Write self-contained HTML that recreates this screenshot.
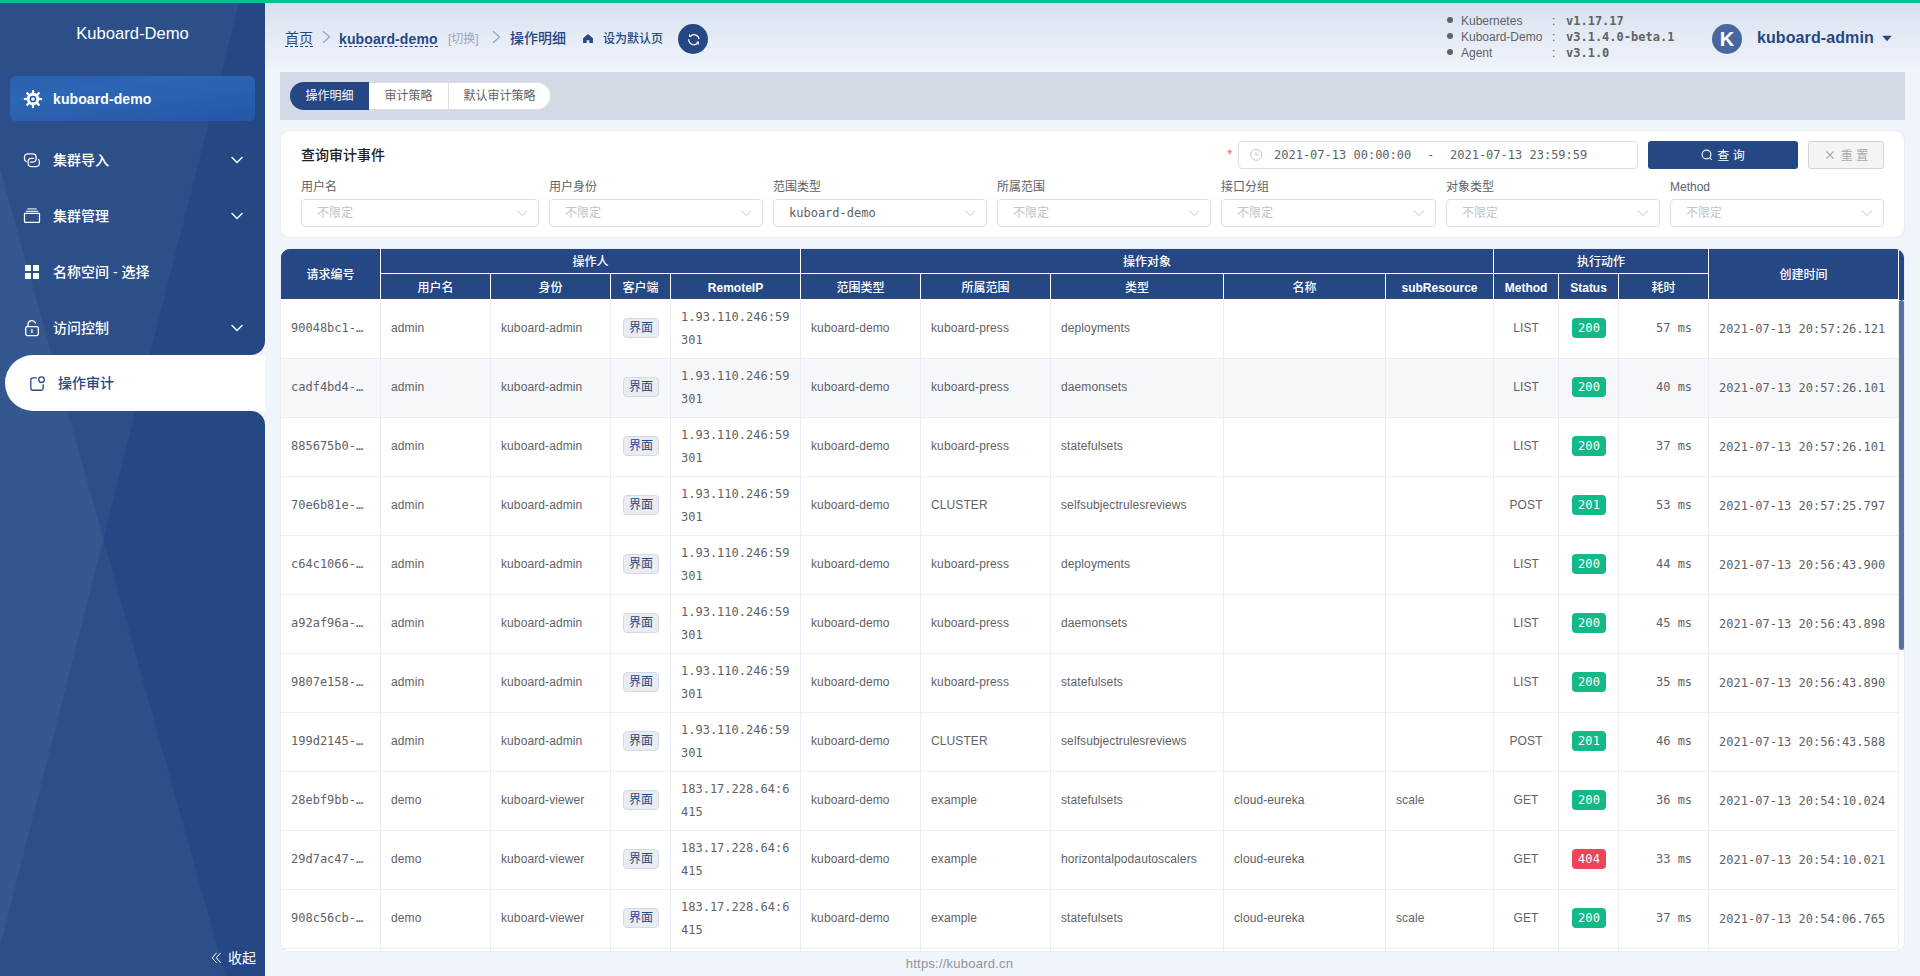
<!DOCTYPE html>
<html lang="zh-CN">
<head>
<meta charset="utf-8">
<title>Kuboard-Demo</title>
<style>
*{box-sizing:border-box;margin:0;padding:0}
html,body{width:1920px;height:976px;overflow:hidden}
body{font-family:"Liberation Sans","Noto Sans CJK SC",sans-serif;font-size:12px;color:#606266;background:#f0f4fb;position:relative}
.mono{font-family:"DejaVu Sans Mono","Liberation Mono","Noto Sans CJK SC",monospace}
.abs{position:absolute}
#topbar{left:0;top:0;width:1920px;height:3px;background:#0dbe8e;z-index:50}
/* sidebar */
#side{left:0;top:0;width:265px;height:976px;background:#254885;overflow:hidden}
#side svg.bg{position:absolute;left:0;top:0}
#brand{left:0;top:23px;width:265px;text-align:center;color:#fff;font-size:16.6px;line-height:22px}
#cluster{left:10px;top:76px;width:245px;height:45px;border-radius:6px;background:linear-gradient(172deg,#2a60af 0%,#2c66b4 30%,#2a60af 60%,#2456a7 100%);overflow:hidden}
#cluster span{position:absolute;left:43px;top:1px;line-height:45px;color:#fff;font-weight:bold;font-size:14px;letter-spacing:0.1px}
.mi{left:0;width:265px;height:56px;color:#fff;font-weight:500;font-size:14px}
.mi .t{position:absolute;left:53px;top:0;line-height:56px}
.mi svg.ic{position:absolute;left:23px;top:19px}
.mi svg.ch{position:absolute;left:230px;top:22px}
#sel{left:5px;top:355px;width:260px;height:56px;background:#fff;border-radius:28px 0 0 28px;color:#254885;font-weight:500;font-size:14px}
#sel .t{position:absolute;left:53px;top:0;line-height:56px}
#fold{left:211px;top:948px;color:#fff;font-size:14px;line-height:20px}
/* header */
#hdr{left:265px;top:0;width:1655px;height:72px;background:linear-gradient(180deg,#d4e0ee 0%,#e5ebf5 50%,#f0f4fb 100%)}
.bc{top:27px;line-height:22px;color:#254885;white-space:nowrap}
.dash{border-bottom:1px dashed #254885}
/* tabs */
#tabbar{left:280px;top:72px;width:1625px;height:48px;background:#d3dae5}
.rb{top:82px;height:28px;line-height:29px;text-align:center;font-size:12px;background:#fff;color:#606266}
/* query card */
#card{left:280px;top:130px;width:1625px;height:108px;background:#fff;border-radius:10px;border:1px solid #e9ecf5}
.lbl{top:179px;line-height:16px;font-size:12px;color:#606266}
.selbox{top:199px;height:28px;border:1px solid #dcdfe6;border-radius:4px;background:#fff;font-size:12px;line-height:26px;color:#c0c4cc;padding-left:15px}
.selbox svg{position:absolute;right:10px;top:7px}
/* table */
#tbl{left:280px;top:248px;width:1625px;height:704px;background:#fff;border-radius:10px;overflow:hidden;border:1px solid #e9ecf5}
table{border-collapse:separate;border-spacing:0;table-layout:fixed;width:1618px}
th{background:#254885;color:#fff;font-weight:bold;font-size:12px;text-align:center;border-right:1px solid #fff;border-bottom:1px solid #fff;height:25px;line-height:16px;padding:2px 0 0}
thead tr+tr th{height:26px}
th.z{font-weight:500}
td{height:59px;border-right:1px solid #ebeef5;border-bottom:1px solid #ebeef5;padding:0 10px 2px;font-size:12px;line-height:23px;color:#606266;white-space:nowrap;overflow:hidden;background:#fff;vertical-align:middle}
td.ip,td.ts{padding-bottom:0}
td.ip{white-space:normal;word-break:break-all}
tr.st td{background:#f5f7fa}
td{letter-spacing:0.1px}
td.m{font-family:"DejaVu Sans Mono","Liberation Mono",monospace;letter-spacing:0}
td.c{text-align:center}
td.r{text-align:right;padding-right:16px}
.tag-b{display:inline-block;height:20px;line-height:18px;padding:0 4.5px;margin-left:1px;border:1px solid #d3dae5;background:#e9edf2;color:#254885;border-radius:4px;font-size:12px;vertical-align:middle}
.tag-g,.tag-r{display:inline-block;width:34px;margin-left:1px;text-align:center;height:20px;line-height:20px;padding:0;border-radius:4px;color:#fff;font-size:12px;font-family:"DejaVu Sans Mono","Liberation Mono",monospace;vertical-align:middle}
.tag-g{background:#13b986}
.tag-r{background:#ee4458}
#foot{left:265px;top:954px;width:1389px;text-align:center;line-height:20px;font-size:13px;letter-spacing:0.23px;color:#909399}
</style>
</head>
<body>
<div id="topbar" class="abs"></div>

<!-- ============ SIDEBAR ============ -->
<div id="side" class="abs">
  <svg class="bg" width="265" height="976" viewBox="0 0 265 976">
    <rect width="265" height="976" fill="#254885"/>
    <polygon points="0,0 239.7,0 0,947" fill="#2c4f8a"/>
    <polygon points="0,168.6 225.5,976 0,976" fill="#2c4f8a"/>
    <polygon points="0,168.6 103.3,539 0,947" fill="#35578f"/>
  </svg>
  <div id="brand" class="abs">Kuboard-Demo</div>
  <div id="cluster" class="abs">
    <svg class="abs" style="left:13px;top:13px" width="20" height="20" viewBox="0 0 20 20"><g fill="#fff"><circle cx="10" cy="10" r="6.2"/><path d="M8.7 5 L9 0.9 H11 L11.3 5 Z M8.7 15 L9 19.1 H11 L11.3 15 Z M5 8.7 L0.9 9 V11 L5 11.3 Z M15 8.7 L19.1 9 V11 L15 11.3 Z"/><path transform="rotate(45 10 10)" d="M8.7 5 L9 0.9 H11 L11.3 5 Z M8.7 15 L9 19.1 H11 L11.3 15 Z M5 8.7 L0.9 9 V11 L5 11.3 Z M15 8.7 L19.1 9 V11 L15 11.3 Z"/></g><circle cx="10" cy="10" r="2.6" fill="none" stroke="#2457a8" stroke-width="1.5"/></svg>
    <span>kuboard-demo</span>
  </div>
  <div class="mi abs" style="top:132px">
    <svg class="ic" style="left:17px;top:13px" width="30" height="30" viewBox="0 0 30 30" fill="none" stroke="#fff" stroke-width="1.25" stroke-linecap="round"><path d="M9.1 16.57 A3.2 3.2 0 0 1 7.5 13.8 V12 A3.2 3.2 0 0 1 10.7 8.8 H15.9 A3.2 3.2 0 0 1 19.1 12 V13.8 A3.2 3.2 0 0 1 15.9 17 H13.3"/><path d="M21.46 14.34 A3.2 3.2 0 0 1 22.4 16.6 V18.3 A3.2 3.2 0 0 1 19.2 21.5 H14.3 A3.2 3.2 0 0 1 11.1 18.3 V16.6 A3.2 3.2 0 0 1 14.3 13.4 H16.8"/></svg>
    <span class="t">集群导入</span>
    <svg class="ch" width="14" height="12" viewBox="0 0 14 12" fill="none" stroke="#fff" stroke-width="1.3"><path d="M1.5 3 L7 8.5 L12.5 3"/></svg>
  </div>
  <div class="mi abs" style="top:188px">
    <svg class="ic" style="left:17px;top:13px" width="30" height="30" viewBox="0 0 30 30" fill="none" stroke="#fff" stroke-width="1.25"><rect x="7.5" y="12.45" width="15" height="8.95" rx="0.6"/><path d="M8.9 10.3 H21.2" opacity="0.85"/><path d="M10.3 7.85 H19.7" opacity="0.7" stroke-width="1.4"/></svg>
    <span class="t">集群管理</span>
    <svg class="ch" width="14" height="12" viewBox="0 0 14 12" fill="none" stroke="#fff" stroke-width="1.3"><path d="M1.5 3 L7 8.5 L12.5 3"/></svg>
  </div>
  <div class="mi abs" style="top:244px">
    <svg class="ic" style="left:17px;top:13px" width="30" height="30" viewBox="0 0 30 30" fill="#fff"><rect x="8" y="8.1" width="6" height="6" rx="0.6"/><rect x="16" y="8.1" width="6" height="6" rx="0.6"/><rect x="8" y="16.1" width="6" height="6" rx="0.6"/><rect x="16" y="16.1" width="6" height="6" rx="0.6"/></svg>
    <span class="t">名称空间 - 选择</span>
  </div>
  <div class="mi abs" style="top:300px">
    <svg class="ic" style="left:17px;top:13px" width="30" height="30" viewBox="0 0 30 30" fill="none" stroke="#fff" stroke-width="1.3"><rect x="8.65" y="13.6" width="12.7" height="8.95" rx="1.8"/><path d="M11 13.4 V11.2 A3.9 3.9 0 0 1 18.5 10" stroke-linecap="round"/><path d="M14.9 16 V20" stroke-width="1.8" opacity="0.75"/></svg>
    <span class="t">访问控制</span>
    <svg class="ch" width="14" height="12" viewBox="0 0 14 12" fill="none" stroke="#fff" stroke-width="1.3"><path d="M1.5 3 L7 8.5 L12.5 3"/></svg>
  </div>
  <!-- concave corners around selected item -->
  <svg class="abs" style="left:251px;top:341px" width="14" height="14" viewBox="0 0 14 14"><path d="M14 0 V14 H0 A14 14 0 0 0 14 0 Z" fill="#f0f4fb"/></svg>
  <svg class="abs" style="left:251px;top:411px" width="14" height="14" viewBox="0 0 14 14"><path d="M14 14 V0 H0 A14 14 0 0 1 14 14 Z" fill="#f0f4fb"/></svg>
  <div id="sel" class="abs">
    <svg class="abs" style="left:17px;top:13px" width="30" height="30" viewBox="0 0 30 30" fill="none" stroke="#254885" stroke-width="1.3"><path d="M14.8 9.9 H11 A2.2 2.2 0 0 0 8.8 12.1 V20.05 A2.2 2.2 0 0 0 11 22.25 H19 A2.2 2.2 0 0 0 21.2 20.05 V16.2"/><circle cx="19.5" cy="11.7" r="2.8"/></svg>
    <span class="t">操作审计</span>
  </div>
  <div id="fold" class="abs"><svg class="abs" style="left:0;top:4px" width="12" height="12" viewBox="0 0 12 12" fill="none" stroke="#fff" stroke-width="1"><path d="M5.6 0.8 L1.2 5.8 L5.6 10.8 M9.7 0.8 L5.3 5.8 L9.7 10.8"/></svg><span style="margin-left:17px">收起</span></div>
</div>

<!-- ============ HEADER ============ -->
<div id="hdr" class="abs"></div>
<div class="bc abs" style="left:285px;font-size:14px"><span class="dash">首页</span></div>
<svg class="abs" style="left:321px;top:30px" width="10" height="14" viewBox="0 0 10 14" fill="none" stroke="#8ea2c6" stroke-width="1.15"><path d="M2 1.3 L8.6 7 L2 12.7"/></svg>
<div class="bc abs" style="left:339px;top:28px;font-size:14px;font-weight:bold;letter-spacing:0.12px">kuboard-demo</div>
<div class="abs" style="left:339px;top:46px;width:99px;height:0;border-top:1px dashed #254885"></div>
<div class="bc abs" style="left:448px;top:28px;font-size:12px;color:#9aa8c0">[切换]</div>
<svg class="abs" style="left:491px;top:30px" width="10" height="14" viewBox="0 0 10 14" fill="none" stroke="#8ea2c6" stroke-width="1.15"><path d="M2 1.3 L8.6 7 L2 12.7"/></svg>
<div class="bc abs" style="left:510px;font-size:14px;font-weight:500">操作明细</div>
<svg class="abs" style="left:582px;top:33px" width="12" height="12" viewBox="0 0 12 12"><path d="M6 1 L10.9 5.2 V10 H7.4 V7.2 H4.6 V10 H1.1 V5.2 Z" fill="#254885"/></svg>
<div class="bc abs" style="left:603px;top:28px;font-size:12px;font-weight:500">设为默认页</div>
<div class="abs" style="left:678px;top:24px;width:30px;height:30px;border-radius:15px;background:#254885">
  <svg class="abs" style="left:4px;top:4px" width="24" height="24" viewBox="0 0 24 24" fill="none" stroke="#fff" stroke-width="1.25"><path d="M9 7.6 A5.3 5.3 0 0 1 17.2 11.1"/><path d="M6.75 11.3 A5.3 5.1 0 0 0 15.5 15.5"/><path d="M7 5.9 V9.1 H10 Z" fill="#fff" stroke="none"/><path d="M17 17 V13.6 L14.1 13.8 Z" fill="#fff" stroke="none"/></svg>
</div>

<!-- version info -->
<div class="abs" style="left:1447px;top:13px;width:260px;line-height:16px;font-size:12px;color:#606266">
  <div><span style="display:inline-block;width:6px;height:6px;border-radius:3px;background:#606266;vertical-align:2px;margin-right:8px"></span><span style="display:inline-block;width:91px">Kubernetes</span><span style="display:inline-block;width:14px">:</span><b class="mono">v1.17.17</b></div>
  <div><span style="display:inline-block;width:6px;height:6px;border-radius:3px;background:#606266;vertical-align:2px;margin-right:8px"></span><span style="display:inline-block;width:91px">Kuboard-Demo</span><span style="display:inline-block;width:14px">:</span><b class="mono">v3.1.4.0-beta.1</b></div>
  <div><span style="display:inline-block;width:6px;height:6px;border-radius:3px;background:#606266;vertical-align:2px;margin-right:8px"></span><span style="display:inline-block;width:91px">Agent</span><span style="display:inline-block;width:14px">:</span><b class="mono">v3.1.0</b></div>
</div>
<div class="abs" style="left:1712px;top:24px;width:30px;height:30px;border-radius:15px;background:#48679f;color:#fff;font-weight:bold;font-size:20px;line-height:30px;text-align:center">K</div>
<div class="abs" style="left:1757px;top:27px;font-size:16px;line-height:22px;font-weight:bold;color:#254885;letter-spacing:0.1px">kuboard-admin</div>
<svg class="abs" style="left:1882px;top:35px" width="10" height="7" viewBox="0 0 10 7"><path d="M0.3 0.8 H9.7 L5 6.3 Z" fill="#254885"/></svg>

<!-- ============ TABS ============ -->
<div id="tabbar" class="abs"></div>
<div class="rb abs" style="left:290px;width:79px;background:#254885;color:#fff;border-radius:14px 0 0 14px">操作明细</div>
<div class="rb abs" style="left:369px;width:80px;border:1px solid #dcdfe6;border-left:0;line-height:27px">审计策略</div>
<div class="rb abs" style="left:449px;width:102px;border-radius:0 14px 14px 0;border:1px solid #dcdfe6;border-left:0;line-height:27px">默认审计策略</div>

<!-- ============ QUERY CARD ============ -->
<div id="card" class="abs"></div>
<div class="abs" style="left:301px;top:145px;font-size:14px;line-height:20px;font-weight:500;color:#1f2022">查询审计事件</div>
<div class="abs" style="left:1227px;top:144px;font-size:14px;line-height:20px;color:#f56c6c">*</div>
<div class="abs mono" style="left:1238px;top:141px;width:400px;height:28px;border:1px solid #dcdfe6;border-radius:4px;background:#fff;line-height:26px;font-size:12px;color:#606266;white-space:pre"><svg class="abs" style="left:11px;top:6px" width="13" height="14" viewBox="0 0 13 14" fill="none" stroke="#c3c5ca" stroke-width="1"><circle cx="6.2" cy="6.8" r="5.5"/><path d="M5.8 3.6 V7 H9.2"/></svg><span class="abs" style="left:35px">2021-07-13 00:00:00</span><span class="abs" style="left:188px">-</span><span class="abs" style="left:211px">2021-07-13 23:59:59</span></div>
<div class="abs" style="left:1648px;top:141px;width:150px;height:28px;border-radius:3px;background:#254885;color:#fff;font-size:12px;line-height:28px;padding-top:1px;text-align:center"><svg width="12" height="12" viewBox="0 0 12 12" fill="none" stroke="#fff" stroke-width="1.1" style="vertical-align:-1px;margin-right:4px"><circle cx="5.5" cy="5.5" r="4.4"/><path d="M8.8 8.8 L10.6 10.6"/></svg>查 询</div>
<div class="abs" style="left:1808px;top:141px;width:76px;height:28px;border-radius:3px;background:#f4f4f5;border:1px solid #d3d4d6;color:#a9abb0;font-size:12px;line-height:26px;padding-top:1px;text-align:center"><svg width="10" height="10" viewBox="0 0 10 10" fill="none" stroke="#a9abb0" stroke-width="1.1" style="vertical-align:0px;margin-right:6px;margin-left:1px"><path d="M1.5 1.5 L8.5 8.5 M8.5 1.5 L1.5 8.5"/></svg>重 置</div>

<div class="lbl abs" style="left:301px">用户名</div>
<div class="lbl abs" style="left:549px">用户身份</div>
<div class="lbl abs" style="left:773px">范围类型</div>
<div class="lbl abs" style="left:997px">所属范围</div>
<div class="lbl abs" style="left:1221px">接口分组</div>
<div class="lbl abs" style="left:1446px">对象类型</div>
<div class="lbl abs" style="left:1670px">Method</div>

<div class="selbox abs" style="left:301px;width:238px">不限定<svg width="12" height="12" viewBox="0 0 12 12" fill="none" stroke="#c0c4cc" stroke-width="1"><path d="M1 3.5 L6 8.5 L11 3.5"/></svg></div>
<div class="selbox abs" style="left:549px;width:214px">不限定<svg width="12" height="12" viewBox="0 0 12 12" fill="none" stroke="#c0c4cc" stroke-width="1"><path d="M1 3.5 L6 8.5 L11 3.5"/></svg></div>
<div class="selbox abs mono" style="left:773px;width:214px;color:#606266">kuboard-demo<svg width="12" height="12" viewBox="0 0 12 12" fill="none" stroke="#c0c4cc" stroke-width="1"><path d="M1 3.5 L6 8.5 L11 3.5"/></svg></div>
<div class="selbox abs" style="left:997px;width:214px">不限定<svg width="12" height="12" viewBox="0 0 12 12" fill="none" stroke="#c0c4cc" stroke-width="1"><path d="M1 3.5 L6 8.5 L11 3.5"/></svg></div>
<div class="selbox abs" style="left:1221px;width:215px">不限定<svg width="12" height="12" viewBox="0 0 12 12" fill="none" stroke="#c0c4cc" stroke-width="1"><path d="M1 3.5 L6 8.5 L11 3.5"/></svg></div>
<div class="selbox abs" style="left:1446px;width:214px">不限定<svg width="12" height="12" viewBox="0 0 12 12" fill="none" stroke="#c0c4cc" stroke-width="1"><path d="M1 3.5 L6 8.5 L11 3.5"/></svg></div>
<div class="selbox abs" style="left:1670px;width:214px">不限定<svg width="12" height="12" viewBox="0 0 12 12" fill="none" stroke="#c0c4cc" stroke-width="1"><path d="M1 3.5 L6 8.5 L11 3.5"/></svg></div>

<!-- ============ TABLE ============ -->
<div id="tbl" class="abs">
<div class="abs" style="left:0;top:0;width:1618px;height:50px;background:#254885"></div>
<div class="abs" style="left:1618px;top:0;width:5px;height:51px;background:#254885;border-radius:0 9px 0 0"></div>
<div class="abs" style="left:1618px;top:51px;width:5px;height:350px;background:#5673a0;border-radius:3px"></div>
<table class="abs" style="left:0;top:0">
<colgroup><col style="width:100px"><col style="width:110px"><col style="width:120px"><col style="width:60px"><col style="width:130px"><col style="width:120px"><col style="width:130px"><col style="width:173px"><col style="width:162px"><col style="width:108px"><col style="width:65px"><col style="width:60px"><col style="width:90px"><col style="width:190px"></colgroup>
<thead>
<tr><th rowspan="2" class="z">请求编号</th><th colspan="4" class="z">操作人</th><th colspan="5" class="z">操作对象</th><th colspan="3" class="z">执行动作</th><th rowspan="2" class="z">创建时间</th></tr>
<tr><th class="z">用户名</th><th class="z">身份</th><th class="z">客户端</th><th>RemoteIP</th><th class="z">范围类型</th><th class="z">所属范围</th><th class="z">类型</th><th class="z">名称</th><th>subResource</th><th>Method</th><th>Status</th><th class="z">耗时</th></tr>
</thead>
<tbody>
<tr><td class="m">90048bc1-…</td><td>admin</td><td>kuboard-admin</td><td class="c"><span class="tag-b">界面</span></td><td class="m ip">1.93.110.246:59301</td><td>kuboard-demo</td><td>kuboard-press</td><td>deployments</td><td></td><td></td><td class="c">LIST</td><td class="c"><span class="tag-g">200</span></td><td class="m r">57 ms</td><td class="m ts">2021-07-13 20:57:26.121</td></tr>
<tr class="st"><td class="m">cadf4bd4-…</td><td>admin</td><td>kuboard-admin</td><td class="c"><span class="tag-b">界面</span></td><td class="m ip">1.93.110.246:59301</td><td>kuboard-demo</td><td>kuboard-press</td><td>daemonsets</td><td></td><td></td><td class="c">LIST</td><td class="c"><span class="tag-g">200</span></td><td class="m r">40 ms</td><td class="m ts">2021-07-13 20:57:26.101</td></tr>
<tr><td class="m">885675b0-…</td><td>admin</td><td>kuboard-admin</td><td class="c"><span class="tag-b">界面</span></td><td class="m ip">1.93.110.246:59301</td><td>kuboard-demo</td><td>kuboard-press</td><td>statefulsets</td><td></td><td></td><td class="c">LIST</td><td class="c"><span class="tag-g">200</span></td><td class="m r">37 ms</td><td class="m ts">2021-07-13 20:57:26.101</td></tr>
<tr><td class="m">70e6b81e-…</td><td>admin</td><td>kuboard-admin</td><td class="c"><span class="tag-b">界面</span></td><td class="m ip">1.93.110.246:59301</td><td>kuboard-demo</td><td>CLUSTER</td><td>selfsubjectrulesreviews</td><td></td><td></td><td class="c">POST</td><td class="c"><span class="tag-g">201</span></td><td class="m r">53 ms</td><td class="m ts">2021-07-13 20:57:25.797</td></tr>
<tr><td class="m">c64c1066-…</td><td>admin</td><td>kuboard-admin</td><td class="c"><span class="tag-b">界面</span></td><td class="m ip">1.93.110.246:59301</td><td>kuboard-demo</td><td>kuboard-press</td><td>deployments</td><td></td><td></td><td class="c">LIST</td><td class="c"><span class="tag-g">200</span></td><td class="m r">44 ms</td><td class="m ts">2021-07-13 20:56:43.900</td></tr>
<tr><td class="m">a92af96a-…</td><td>admin</td><td>kuboard-admin</td><td class="c"><span class="tag-b">界面</span></td><td class="m ip">1.93.110.246:59301</td><td>kuboard-demo</td><td>kuboard-press</td><td>daemonsets</td><td></td><td></td><td class="c">LIST</td><td class="c"><span class="tag-g">200</span></td><td class="m r">45 ms</td><td class="m ts">2021-07-13 20:56:43.898</td></tr>
<tr><td class="m">9807e158-…</td><td>admin</td><td>kuboard-admin</td><td class="c"><span class="tag-b">界面</span></td><td class="m ip">1.93.110.246:59301</td><td>kuboard-demo</td><td>kuboard-press</td><td>statefulsets</td><td></td><td></td><td class="c">LIST</td><td class="c"><span class="tag-g">200</span></td><td class="m r">35 ms</td><td class="m ts">2021-07-13 20:56:43.890</td></tr>
<tr><td class="m">199d2145-…</td><td>admin</td><td>kuboard-admin</td><td class="c"><span class="tag-b">界面</span></td><td class="m ip">1.93.110.246:59301</td><td>kuboard-demo</td><td>CLUSTER</td><td>selfsubjectrulesreviews</td><td></td><td></td><td class="c">POST</td><td class="c"><span class="tag-g">201</span></td><td class="m r">46 ms</td><td class="m ts">2021-07-13 20:56:43.588</td></tr>
<tr><td class="m">28ebf9bb-…</td><td>demo</td><td>kuboard-viewer</td><td class="c"><span class="tag-b">界面</span></td><td class="m ip">183.17.228.64:6415</td><td>kuboard-demo</td><td>example</td><td>statefulsets</td><td>cloud-eureka</td><td>scale</td><td class="c">GET</td><td class="c"><span class="tag-g">200</span></td><td class="m r">36 ms</td><td class="m ts">2021-07-13 20:54:10.024</td></tr>
<tr><td class="m">29d7ac47-…</td><td>demo</td><td>kuboard-viewer</td><td class="c"><span class="tag-b">界面</span></td><td class="m ip">183.17.228.64:6415</td><td>kuboard-demo</td><td>example</td><td>horizontalpodautoscalers</td><td>cloud-eureka</td><td></td><td class="c">GET</td><td class="c"><span class="tag-r">404</span></td><td class="m r">33 ms</td><td class="m ts">2021-07-13 20:54:10.021</td></tr>
<tr><td class="m">908c56cb-…</td><td>demo</td><td>kuboard-viewer</td><td class="c"><span class="tag-b">界面</span></td><td class="m ip">183.17.228.64:6415</td><td>kuboard-demo</td><td>example</td><td>statefulsets</td><td>cloud-eureka</td><td>scale</td><td class="c">GET</td><td class="c"><span class="tag-g">200</span></td><td class="m r">37 ms</td><td class="m ts">2021-07-13 20:54:06.765</td></tr>
<tr><td></td><td></td><td></td><td></td><td></td><td></td><td></td><td></td><td></td><td></td><td></td><td></td><td></td><td></td></tr>
</tbody>
</table>
</div>
<div id="foot" class="abs">https://kuboard.cn</div>
</body>
</html>
